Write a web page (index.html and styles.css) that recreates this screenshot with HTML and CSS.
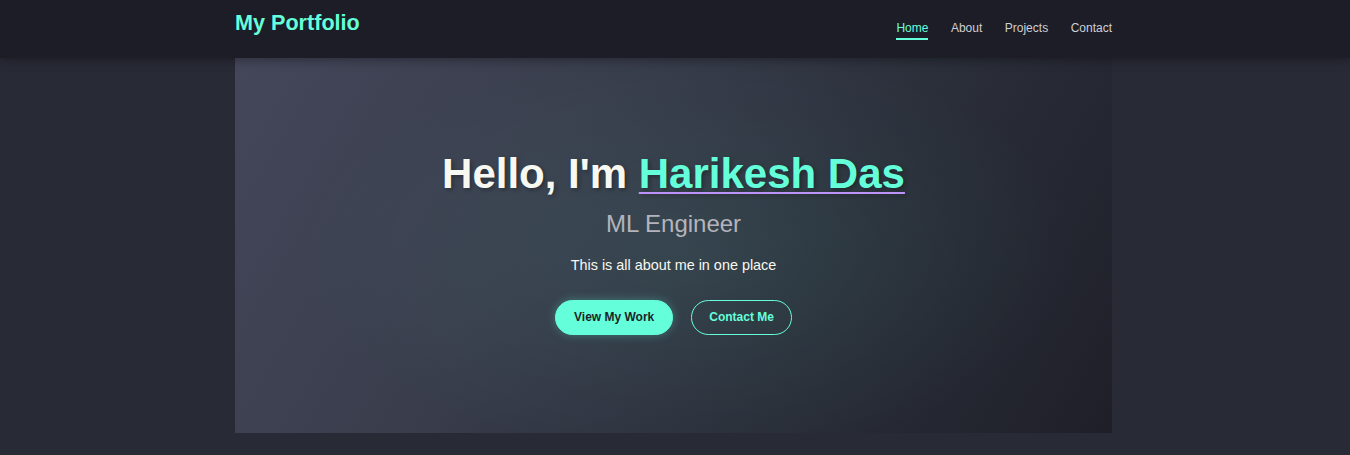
FILE: index.html
```html
<!DOCTYPE html>
<html lang="en">
<head>
<meta charset="utf-8">
<title>My Portfolio</title>
<link rel="stylesheet" href="styles.css">
</head>
<body>
<header class="site-header">
  <div class="container header-inner">
    <a class="logo" href="#">My Portfolio</a>
    <nav class="nav">
      <a class="nav-link active" href="#">Home</a>
      <a class="nav-link" href="#">About</a>
      <a class="nav-link" href="#">Projects</a>
      <a class="nav-link" href="#">Contact</a>
    </nav>
  </div>
</header>
<main class="container">
  <section class="hero">
    <h1 class="hero-title">Hello, I'm <span class="name">Harikesh Das</span></h1>
    <h2 class="hero-subtitle">ML Engineer</h2>
    <p class="hero-text">This is all about me in one place</p>
    <div class="hero-actions">
      <a class="btn btn-primary" href="#">View My Work</a>
      <a class="btn btn-outline" href="#">Contact Me</a>
    </div>
  </section>
</main>
</body>
</html>
```
FILE: styles.css
```css
* { box-sizing: border-box; }

html, body {
  margin: 0;
  padding: 0;
}

body {
  background: #282a36;
  font-family: "Liberation Sans", Arial, sans-serif;
  color: #f8f8f2;
}

a { text-decoration: none; }

.container {
  width: 877px;
  margin-left: calc(50% - 440px);
}

.site-header {
  position: relative;
  z-index: 2;
  height: 58px;
  background: #1c1d27;
  box-shadow: 0 2px 10px rgba(0, 0, 0, 0.35);
}

.header-inner {
  display: flex;
  justify-content: space-between;
  align-items: flex-start;
  padding-top: 10px;
}

.logo {
  font-size: 21.6px;
  line-height: 26px;
  font-weight: 700;
  color: #64ffda;
}

.nav {
  display: flex;
  gap: 22.5px;
  margin-top: 11px;
}

.nav-link {
  font-size: 12px;
  line-height: 14px;
  color: #cfcfd4;
  padding-bottom: 3px;
  border-bottom: 2px solid transparent;
}

.nav-link.active {
  color: #64ffda;
  border-bottom-color: #64ffda;
}

.hero {
  position: relative;
  z-index: 1;
  height: 375px;
  padding-top: 91px;
  text-align: center;
  background:
    radial-gradient(ellipse 45% 55% at 52% 52%, rgba(100, 255, 218, 0.08), rgba(100, 255, 218, 0) 100%),
    linear-gradient(120deg, #44475a 0%, #393d4c 35%, #2b2f3a 65%, #1e1f29 100%);
}

.hero-title {
  margin: 0;
  font-size: 42px;
  line-height: 50px;
  font-weight: 700;
  color: #f8f8f2;
  text-shadow: 2px 2px 4px rgba(0, 0, 0, 0.3);
}

.name {
  color: #64ffda;
  text-decoration: underline;
  text-decoration-color: #bd93f9;
  text-decoration-thickness: 2px;
  text-underline-offset: 4px;
}

.hero-subtitle {
  margin: 11px 0 0;
  font-size: 24px;
  line-height: 28.8px;
  font-weight: 400;
  color: #b4b4bc;
}

.hero-text {
  margin: 16px 0 0;
  font-size: 14.4px;
  line-height: 20px;
  color: #f8f8f2;
}

.hero-actions {
  display: flex;
  justify-content: center;
  gap: 18px;
  margin-top: 25px;
}

.btn {
  display: inline-block;
  font-size: 12px;
  line-height: 13px;
  font-weight: 700;
  padding: 10px 18px;
  border-radius: 20px;
  border: 1px solid #64ffda;
}

.btn-primary {
  background: #64ffda;
  color: #1e1f29;
  box-shadow: 0 0 10px rgba(100, 255, 218, 0.3);
}

.btn-outline {
  background: transparent;
  color: #64ffda;
  padding-left: 17px;
  padding-right: 17px;
}
```
